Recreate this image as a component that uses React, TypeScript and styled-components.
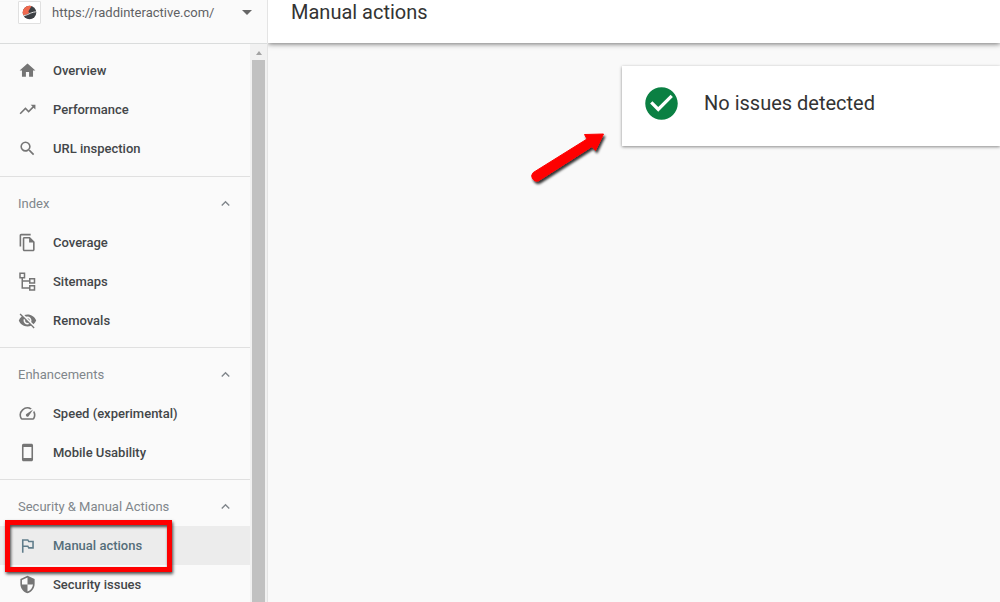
import React from "react";
import styled, { createGlobalStyle, css } from "styled-components";
import {
  MdCheckCircle,
  MdExpandLess,
  MdHome,
  MdOutlineFileCopy,
  MdOutlinedFlag,
  MdSearch,
  MdSecurity,
  MdSmartphone,
  MdSpeed,
  MdTrendingUp,
  MdVisibilityOff,
} from "react-icons/md";

const GlobalStyle = createGlobalStyle`
  *, *::before, *::after { box-sizing: border-box; }
  body {
    margin: 0;
    background: #f9f9f9;
    color: #3c4043;
    font-family: Roboto, "Liberation Sans", sans-serif;
    overflow: hidden;
  }
  button { font: inherit; color: inherit; background: none; border: 0; padding: 0; cursor: pointer; }
`;

const Page = styled.div`
  display: flex;
  height: 100vh;
`;

const Sidebar = styled.aside`
  display: flex;
  flex-direction: column;
  flex: none;
  width: 268px;
  background: #fafafa;
  border-right: 1px solid #e4e4e4;
`;

const PropertyBar = styled.div`
  flex: none;
  height: 44px;
  border-bottom: 1px solid #dadcdc;
`;

const PropertyButton = styled.button`
  display: flex;
  align-items: center;
  width: 100%;
  height: 24px;
  padding: 0 15px 0 18px;
  font-size: 13px;
  color: #5f6164;
`;

const SiteIcon = styled.span`
  display: flex;
  align-items: center;
  justify-content: center;
  width: 23px;
  height: 23px;
  margin-right: 11px;
  background: #fff;
  border: 1px solid #e0e0e0;
  border-radius: 1px;
`;

const Caret = styled.span`
  margin-left: auto;
  border: 5px solid transparent;
  border-top-color: #666;
  border-bottom: 0;
`;

const ScrollArea = styled.div`
  display: flex;
  flex: 1;
  min-height: 0;
  overflow: hidden;
`;

const Nav = styled.nav`
  flex: 1;
`;

const ScrollTrack = styled.div`
  display: flex;
  flex-direction: column;
  align-items: center;
  width: 17px;
  padding-top: 7px;
  background: #f1f1f1;
`;

const ScrollUp = styled.span`
  border: 3px solid transparent;
  border-bottom: 4px solid #a3a3a3;
  border-top: 0;
`;

const ScrollThumb = styled.div`
  flex: 1;
  width: 13px;
  margin-top: 5px;
  background: #c1c1c1;
`;

const Group = styled.section`
  padding: 7px 0;
  &:first-child { padding-bottom: 8px; }
  & + & { border-top: 1px solid #e0e0e0; }
`;

const GroupHeader = styled.button`
  display: flex;
  align-items: center;
  justify-content: space-between;
  width: 100%;
  height: 39px;
  padding: 0 16px 0 18px;
  font-size: 13px;
  color: #80868b;
`;

const NavLink = styled.a<{ $active?: boolean }>`
  position: relative;
  display: flex;
  align-items: center;
  gap: 16px;
  height: 39px;
  padding-left: 18px;
  font-size: 13px;
  font-weight: 500;
  color: #434649;
  text-decoration: none;
  svg { flex: none; color: #757575; }
  ${(p) =>
    p.$active &&
    css`
      background: #ececec;
      color: #546e7a;
      svg { color: #607d8b; }
    `}
`;

const HighlightFrame = styled.span`
  position: absolute;
  z-index: 1;
  top: -6px;
  left: 5px;
  width: 167px;
  height: 52px;
  border: 5px solid #fe0000;
  box-shadow: 1px 2px 3px rgba(0, 0, 0, 0.7), inset 1px 2px 3px rgba(0, 0, 0, 0.7);
`;

const Main = styled.main`
  display: flex;
  flex-direction: column;
  flex: 1;
  min-width: 0;
`;

const TitleBar = styled.header`
  height: 43px;
  padding-left: 23px;
  background: #fff;
  box-shadow: 0 1px 5px rgba(0, 0, 0, 0.55);
  clip-path: inset(0 0 -8px 0);
`;

const Title = styled.h1`
  margin: 0;
  font-size: 20px;
  line-height: 24px;
  font-weight: 400;
  color: #333;
`;

const Content = styled.div`
  padding: 23px 0 0 354px;
`;

const StatusCard = styled.section`
  position: relative;
  display: flex;
  align-items: center;
  gap: 23px;
  height: 80px;
  padding: 0 0 6px 20px;
  background: #fff;
  box-shadow: 0 1px 3px rgba(0, 0, 0, 0.45);
  svg { flex: none; }
`;

const StatusText = styled.h2`
  margin: 0;
  font-size: 20px;
  line-height: 24px;
  font-weight: 400;
  color: #333;
`;

const Pointer = styled.svg`
  position: absolute;
  top: 59px;
  left: -97px;
`;

function SitemapIcon() {
  return (
    <svg width="19" height="19" viewBox="0 0 19 19" fill="none" stroke="currentColor" strokeWidth="1.5" aria-hidden="true">
      <path d="M2 1.250h4.500v4.500H2zM11.750 6.750h4.750v4.250h-4.750zM11.750 13.750h4.750v4.250h-4.750zM4.250 5.750v10.250h7.500M4.250 9h7.500" />
    </svg>
  );
}

function SiteLogo() {
  return (
    <svg width="15" height="15" viewBox="0 0 15 15" aria-hidden="true">
      <circle cx="7.5" cy="7.5" r="6.8" fill="#3d4145" />
      <path d="M9.500 1A6.800 6.800 0 0 0 1.200 10C4 10.200 6 9 7.500 7.800 6.500 7.200 6 6.500 7 5.200 8 4 8.500 2.500 9.500 1z" fill="#f0694e" />
      <path d="M1.500 10.500C6 10.500 7.500 7.500 13.800 6.800" stroke="#e6e6e6" strokeWidth="1" fill="none" />
    </svg>
  );
}

type Item = { label: string; icon: React.ReactNode; active?: boolean };

const groups: { title?: string; items: Item[] }[] = [
  {
    items: [
      { label: "Overview", icon: <MdHome size={19} /> },
      { label: "Performance", icon: <MdTrendingUp size={19} /> },
      { label: "URL inspection", icon: <MdSearch size={19} /> },
    ],
  },
  {
    title: "Index",
    items: [
      { label: "Coverage", icon: <MdOutlineFileCopy size={19} /> },
      { label: "Sitemaps", icon: <SitemapIcon /> },
      { label: "Removals", icon: <MdVisibilityOff size={19} /> },
    ],
  },
  {
    title: "Enhancements",
    items: [
      { label: "Speed (experimental)", icon: <MdSpeed size={19} /> },
      { label: "Mobile Usability", icon: <MdSmartphone size={19} /> },
    ],
  },
  {
    title: "Security & Manual Actions",
    items: [
      { label: "Manual actions", icon: <MdOutlinedFlag size={19} />, active: true },
      { label: "Security issues", icon: <MdSecurity size={19} /> },
    ],
  },
];

export default function App() {
  return (
    <Page>
      <GlobalStyle />
      <Sidebar>
        <PropertyBar>
          <PropertyButton type="button" aria-haspopup="listbox">
            <SiteIcon><SiteLogo /></SiteIcon>
            https://raddinteractive.com/
            <Caret />
          </PropertyButton>
        </PropertyBar>
        <ScrollArea>
          <Nav>
            {groups.map((group, i) => (
              <Group key={i}>
                {group.title && (
                  <GroupHeader type="button" aria-expanded="true">
                    {group.title}
                    <MdExpandLess size={17} />
                  </GroupHeader>
                )}
                {group.items.map((item) => (
                  <NavLink key={item.label} href="#" $active={item.active} aria-current={item.active ? "page" : undefined}>
                    {item.icon}
                    {item.label}
                    {item.active && <HighlightFrame />}
                  </NavLink>
                ))}
              </Group>
            ))}
          </Nav>
          <ScrollTrack>
            <ScrollUp />
            <ScrollThumb />
          </ScrollTrack>
        </ScrollArea>
      </Sidebar>
      <Main>
        <TitleBar>
          <Title>Manual actions</Title>
        </TitleBar>
        <Content>
          <StatusCard>
            <MdCheckCircle size={39} color="#0b8043" />
            <StatusText>No issues detected</StatusText>
            <Pointer width="90" height="64" viewBox="0 0 90 64" aria-hidden="true">
              <defs>
                <filter id="drop" x="-20%" y="-20%" width="140%" height="150%">
                  <feDropShadow dx="1.5" dy="2.5" stdDeviation="1.3" floodOpacity="0.8" />
                </filter>
              </defs>
              <path
                d="M8.300 47.500L62 14 59.500 9.500 78.500 9 70.500 25.500 67 21.500 13.500 55.800A5 5 0 0 1 8.300 47.500z"
                fill="#fe0000"
                stroke="#fe0000"
                strokeLinejoin="round"
                filter="url(#drop)"
              />
            </Pointer>
          </StatusCard>
        </Content>
      </Main>
    </Page>
  );
}
